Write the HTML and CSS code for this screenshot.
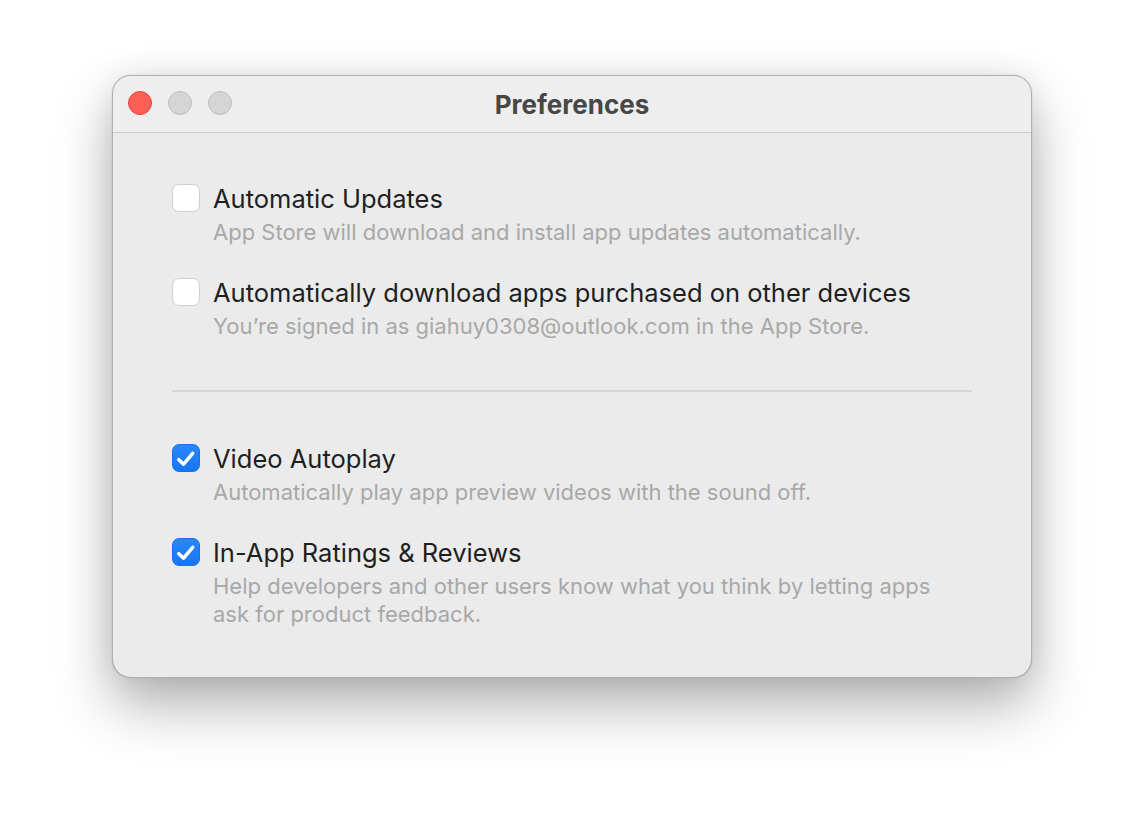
FILE: index.html
```html
<!DOCTYPE html>
<html lang="en">
<head>
  <meta charset="UTF-8">
  <meta name="viewport" content="width=device-width, initial-scale=1.0">
  <title>Preferences</title>
<link rel="stylesheet" href="styles.css">
</head>
<body>
  <div class="window">
    <div class="titlebar">
      <div class="lights">
        <span class="light close"></span>
        <span class="light"></span>
        <span class="light"></span>
      </div>
      <div class="title">Preferences</div>
    </div>

    <div class="content">
      <div class="group">
        <div class="option">
          <span class="checkbox"></span>
          <div class="text">
            <div class="label">Automatic Updates</div>
            <div class="desc">App Store will download and install app updates automatically.</div>
          </div>
        </div>
        <div class="option">
          <span class="checkbox"></span>
          <div class="text">
            <div class="label">Automatically download apps purchased on other devices</div>
            <div class="desc">You’re signed in as giahuy0308@outlook.com in the App Store.</div>
          </div>
        </div>
      </div>

      <div class="divider"></div>

      <div class="group">
        <div class="option">
          <span class="checkbox checked">
            <svg viewBox="0 0 28 28" width="28" height="28"><path d="M6.2 15.8 L11.4 20.6 L21.2 9" fill="none" stroke="#fff" stroke-width="3.8" stroke-linecap="round" stroke-linejoin="round"/></svg>
          </span>
          <div class="text">
            <div class="label">Video Autoplay</div>
            <div class="desc">Automatically play app preview videos with the sound off.</div>
          </div>
        </div>
        <div class="option">
          <span class="checkbox checked">
            <svg viewBox="0 0 28 28" width="28" height="28"><path d="M6.2 15.8 L11.4 20.6 L21.2 9" fill="none" stroke="#fff" stroke-width="3.8" stroke-linecap="round" stroke-linejoin="round"/></svg>
          </span>
          <div class="text">
            <div class="label">In-App Ratings &amp; Reviews</div>
            <div class="desc">Help developers and other users know what you think by letting apps<br>ask for product feedback.</div>
          </div>
        </div>
      </div>
    </div>
  </div>
</body>
</html>
```

FILE: styles.css
```css
* {
  margin: 0;
  padding: 0;
  box-sizing: border-box;
}
html, body {
  min-height: 100%;
}
body {
  font-family: Inter, "Noto Sans", sans-serif;
  background-color: #ffffff;
  padding-top: 75px;
  min-height: 100vh;
}
.window {
  width: 920px;
  margin: 0 auto;
  background: #ebebeb;
  border: 1px solid #b0b0b0;
  border-radius: 19px;
  box-shadow: 0 28px 56px rgba(0, 0, 0, 0.30), 0 0 30px rgba(0, 0, 0, 0.08), 0 0 1px rgba(0, 0, 0, 0.3);
  overflow: hidden;
}
.titlebar {
  height: 57px;
  background: #eeeeee;
  border-bottom: 1px solid #cdcdcd;
  display: flex;
  align-items: center;
  justify-content: center;
  position: relative;
}
.lights {
  position: absolute;
  left: 15px;
  top: 15px;
  display: flex;
  gap: 16px;
}
.light {
  width: 24px;
  height: 24px;
  border-radius: 50%;
  background: #d5d5d5;
  border: 1px solid #bdbdbd;
}
.light.close {
  background: #fe5f57;
  border-color: #e2463f;
}
.title {
  font-size: 26px;
  font-weight: 700;
  color: #474747;
}
.content {
  padding: 50px 59px 49px 59px;
}
.group {
  display: flex;
  flex-direction: column;
  gap: 31px;
}
.option {
  display: flex;
  align-items: flex-start;
  gap: 13px;
}
.checkbox {
  flex: none;
  width: 28px;
  height: 28px;
  margin-top: 1px;
  border-radius: 7px;
  background: #ffffff;
  border: 1px solid #d0d0d0;
  display: flex;
  align-items: center;
  justify-content: center;
}
.checkbox.checked {
  background: linear-gradient(#2a86fb, #1677f2);
  border-color: #1a72e6;
}
.label {
  font-size: 25.5px;
  line-height: 32px;
  color: #1f1f1f;
}
.desc {
  margin-top: 3px;
  font-size: 22px;
  line-height: 28px;
  color: #a8a8a8;
}
.divider {
  height: 2px;
  background: #d6d6d6;
  margin: 50px 0 51px;
}
```
